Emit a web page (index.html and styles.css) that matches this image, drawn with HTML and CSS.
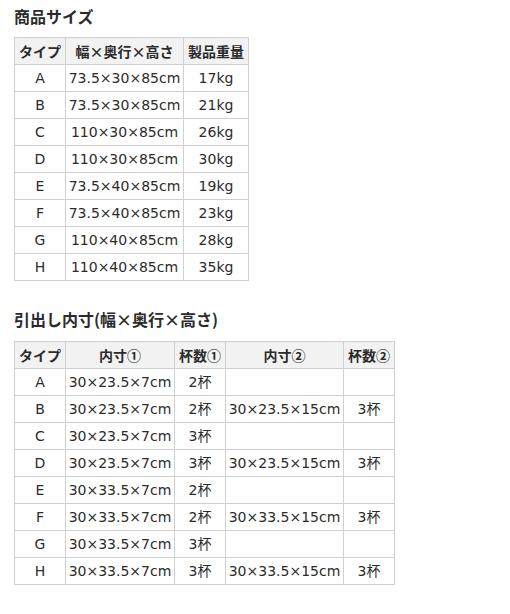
FILE: index.html
```html
<!DOCTYPE html>
<html lang="ja">
<head>
<meta charset="utf-8">
<link rel="stylesheet" href="styles.css">
</head>
<body>
<section class="block">
  <h2 class="title">商品サイズ</h2>
  <table class="spec t1">
    <thead>
      <tr><th class="c-type">タイプ</th><th class="c-size">幅×奥行×高さ</th><th class="c-weight">製品重量</th></tr>
    </thead>
    <tbody>
      <tr><td>A</td><td>73.5×30×85cm</td><td>17kg</td></tr>
      <tr><td>B</td><td>73.5×30×85cm</td><td>21kg</td></tr>
      <tr><td>C</td><td>110×30×85cm</td><td>26kg</td></tr>
      <tr><td>D</td><td>110×30×85cm</td><td>30kg</td></tr>
      <tr><td>E</td><td>73.5×40×85cm</td><td>19kg</td></tr>
      <tr><td>F</td><td>73.5×40×85cm</td><td>23kg</td></tr>
      <tr><td>G</td><td>110×40×85cm</td><td>28kg</td></tr>
      <tr><td>H</td><td>110×40×85cm</td><td>35kg</td></tr>
    </tbody>
  </table>
</section>
<section class="block second">
  <h2 class="title">引出し内寸(幅×奥行×高さ)</h2>
  <table class="spec t2">
    <thead>
      <tr><th class="c-type">タイプ</th><th class="c-in1">内寸①</th><th class="c-n1">杯数①</th><th class="c-in2">内寸②</th><th class="c-n2">杯数②</th></tr>
    </thead>
    <tbody>
      <tr><td>A</td><td>30×23.5×7cm</td><td>2杯</td><td></td><td></td></tr>
      <tr><td>B</td><td>30×23.5×7cm</td><td>2杯</td><td>30×23.5×15cm</td><td>3杯</td></tr>
      <tr><td>C</td><td>30×23.5×7cm</td><td>3杯</td><td></td><td></td></tr>
      <tr><td>D</td><td>30×23.5×7cm</td><td>3杯</td><td>30×23.5×15cm</td><td>3杯</td></tr>
      <tr><td>E</td><td>30×33.5×7cm</td><td>2杯</td><td></td><td></td></tr>
      <tr><td>F</td><td>30×33.5×7cm</td><td>2杯</td><td>30×33.5×15cm</td><td>3杯</td></tr>
      <tr><td>G</td><td>30×33.5×7cm</td><td>3杯</td><td></td><td></td></tr>
      <tr><td>H</td><td>30×33.5×7cm</td><td>3杯</td><td>30×33.5×15cm</td><td>3杯</td></tr>
    </tbody>
  </table>
</section>
</body>
</html>
```
FILE: styles.css
```css
html, body {
  margin: 0;
  padding: 0;
  background: #fff;
}
body {
  padding: 4px 14px 0 14px;
  font-family: "DejaVu Sans", "Noto Sans CJK JP", sans-serif;
  color: #2b2b2b;
  font-size: 14px;
}
.block {
  margin: 0;
}
.second {
  margin-top: 26px;
}
.title {
  margin: 0 0 9px 0;
  font-size: 16px;
  line-height: 24px;
  font-weight: bold;
  font-family: "Noto Sans CJK JP", sans-serif;
  color: #2b2b2b;
}
.second .title {
  margin-bottom: 10px;
}
.spec {
  border-collapse: collapse;
  table-layout: fixed;
}
.spec th,
.spec td {
  border: 1px solid #d0d0d0;
  height: 27px;
  padding: 0;
  text-align: center;
  vertical-align: middle;
  line-height: 20px;
  box-sizing: border-box;
  white-space: nowrap;
}
.spec th {
  background: #f2f2f2;
  font-weight: bold;
  font-family: "Noto Sans CJK JP", sans-serif;
}
.spec td {
  font-family: "DejaVu Sans", "Noto Sans CJK JP", sans-serif;
}
.t1 .c-type { width: 51px; }
.t1 .c-size { width: 118px; }
.t1 .c-weight { width: 65px; }
.t2 .c-type { width: 51px; }
.t2 .c-in1 { width: 109px; }
.t2 .c-n1 { width: 51px; }
.t2 .c-in2 { width: 118px; }
.t2 .c-n2 { width: 51px; }
```
